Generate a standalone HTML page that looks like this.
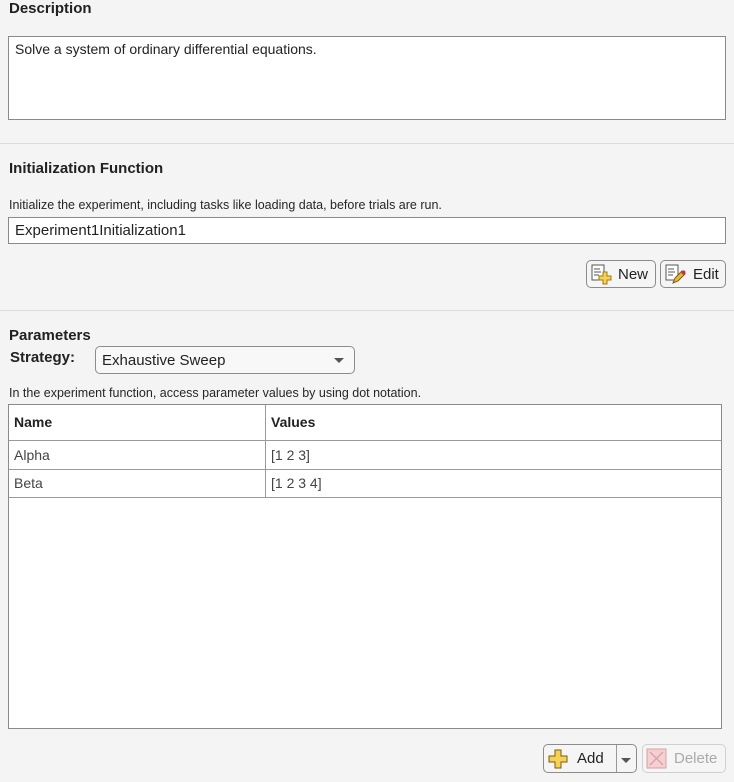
<!DOCTYPE html><html><head><style>
body{margin:0;width:734px;height:782px;background:#f4f4f4;font-family:"Liberation Sans",sans-serif;color:#222;position:relative;overflow:hidden}
.a{position:absolute}
h{position:absolute;font-weight:bold;font-size:15px;color:#212121}
.box{position:absolute;background:#fff;border:1px solid #8a8a8a;box-sizing:border-box}
.hr{position:absolute;left:0;width:734px;height:1px;background:#dcdcdc}
.btn{position:absolute;border:1px solid #8c8c8c;border-radius:5px;box-sizing:border-box;background:#f5f5f5;font-size:15px;display:flex;align-items:center}
.sm{position:absolute;font-size:12.5px;color:#262626}
td{border-right:1px solid #9a9a9a;border-bottom:1px solid #9a9a9a;padding:0 0 0 5px;font-size:14px;color:#444}
</style></head><body>
<h style="left:9px;top:0px">Description</h>
<div class="box" style="left:8px;top:36px;width:718px;height:84px;padding:4px 6px;font-size:14px">Solve a system of ordinary differential equations.</div>
<div class="hr" style="top:143px"></div>
<h style="left:9px;top:160px">Initialization Function</h>
<div class="sm" style="left:9px;top:198px">Initialize the experiment, including tasks like loading data, before trials are run.</div>
<div class="box" style="left:8px;top:217px;width:718px;height:27px;padding:4px 6px;font-size:15px">Experiment1Initialization1</div>
<div class="btn" style="left:586px;top:260px;width:70px;height:28px">
<svg width="24" height="22" style="margin:0 4px 0 3px"><rect x="2" y="2" width="12" height="15" fill="#fff" stroke="#555"/><path d="M4 6h6M4 9h7M4 12h5" stroke="#555"/><path d="M13 9h4v4h4v4h-4v4h-4v-4h-4v-4h4z" fill="#f7d154" stroke="#a07a10"/></svg>New</div>
<div class="btn" style="left:660px;top:260px;width:66px;height:28px">
<svg width="24" height="22" style="margin:0 5px 0 3px"><rect x="2" y="2" width="12" height="15" fill="#fff" stroke="#555"/><path d="M4 6h6M4 9h7M4 12h5" stroke="#555"/><path d="M9 20l2-5 7-7 3 3-7 7z" fill="#e8b838" stroke="#7a5a10"/><circle cx="19.5" cy="9.5" r="2" fill="#c03040"/></svg>Edit</div>
<div class="hr" style="top:310px"></div>
<h style="left:9px;top:327px">Parameters</h>
<div class="a" style="left:10px;top:349px;font-weight:bold;font-size:15px">Strategy:</div>
<div class="btn" style="left:95px;top:346px;width:260px;height:28px;background:#f8f8f8;padding-left:6px">Exhaustive Sweep<svg class="a" style="left:238px;top:11px" width="10" height="6"><path d="M0 0h10L5 5z" fill="#555"/></svg></div>
<div class="sm" style="left:9px;top:386px">In the experiment function, access parameter values by using dot notation.</div>
<div class="box" style="left:8px;top:404px;width:714px;height:325px">
<table style="border-collapse:collapse;width:712px">
<tr style="height:35px"><td style="width:251px;font-weight:bold;color:#222">Name</td><td style="font-weight:bold;color:#222;border-right:none">Values</td></tr>
<tr style="height:29px;background:#fff"><td>Alpha</td><td style="border-right:none">[1 2 3]</td></tr>
<tr style="height:28px"><td>Beta</td><td style="border-right:none">[1 2 3 4]</td></tr>
</table></div>
<div class="btn" style="left:543px;top:744px;width:94px;height:29px">
<svg width="24" height="22" style="margin:0 6px 0 3px"><path d="M8 2h6v6h6v6h-6v6h-6v-6h-6v-6h6z" fill="#f7d154" stroke="#7a5a10"/></svg>Add
<div class="a" style="left:72px;top:0;height:27px;width:1px;background:#999"></div>
<svg class="a" style="left:77px;top:13px" width="10" height="6"><path d="M0 0h10L5 5z" fill="#555"/></svg></div>
<div class="btn" style="left:642px;top:744px;width:84px;height:29px;border-color:#d0d0d0;color:#aaa">
<svg width="22" height="22" style="margin:0 6px 0 3px"><rect x="1" y="1" width="19" height="19" fill="#f4d0d2" stroke="#d9a0a4"/><path d="M4 4l13 13M17 4L4 17" stroke="#d9a0a4" stroke-width="1.3"/></svg>Delete</div>
</body></html>
